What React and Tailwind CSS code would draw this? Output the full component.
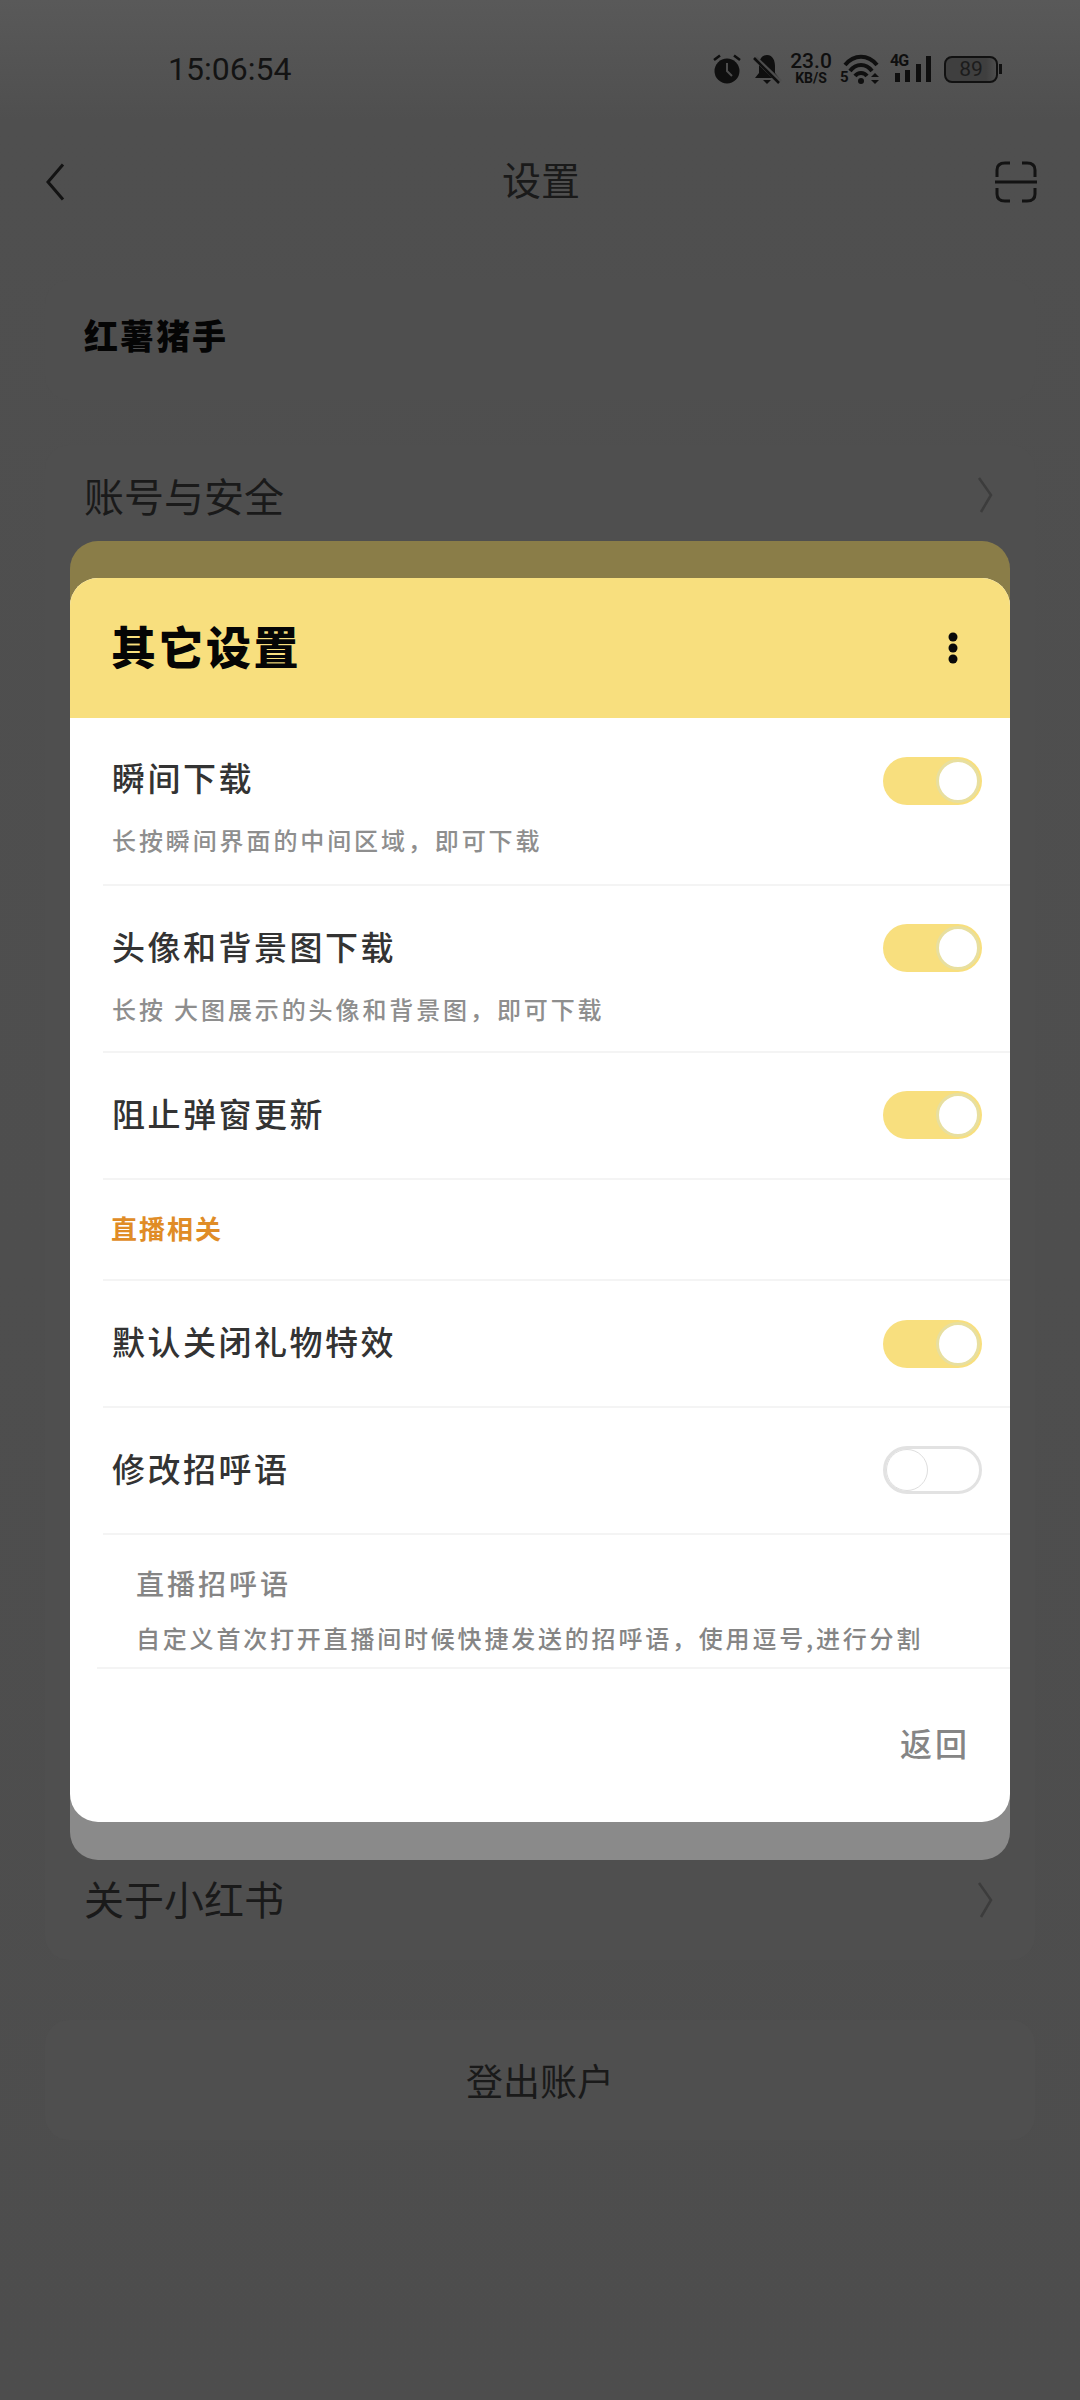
const cjk = "font-['Noto_Sans_CJK_SC',sans-serif]";

function Toggle({ on }) {
  if (on) {
    return (
      <div className="flex h-[48px] w-[99px] shrink-0 items-center justify-end rounded-full bg-[#f8df7e] pr-[2px]">
        <div className="h-[44px] w-[44px] rounded-full border-[3px] border-[#e8df9f] bg-white" />
      </div>
    );
  }
  return (
    <div className="flex h-[48px] w-[99px] shrink-0 items-center rounded-full border-[3px] border-[#e2e2e2] bg-white">
      <div className="h-[42px] w-[42px] rounded-full border border-[#dedede] bg-white" />
    </div>
  );
}

function Row({ title, sub, on, h, top, toggleTop }) {
  return (
    <div className={`ml-[33px] flex justify-between border-b-2 border-[#f4f4f4] pl-[9px] pr-[28px] ${h}`}>
      <div className={top}>
        <div className="h-[40px] text-[33px] leading-[40px] font-medium tracking-[2.5px] whitespace-nowrap text-[#333333]">{title}</div>
        {sub && <div className="mt-[28px] h-[30px] text-[24px] leading-[30px] font-medium tracking-[2.9px] whitespace-nowrap text-[#8e8e8e]">{sub}</div>}
      </div>
      <div className={toggleTop}><Toggle on={on} /></div>
    </div>
  );
}

function Chevron() {
  return (
    <svg width="16" height="38" viewBox="0 0 16 38" fill="none" stroke="#3c3c3c" strokeWidth="2.5" className="shrink-0">
      <path d="M2 2 L14 19 L4 36" />
    </svg>
  );
}

function StatusIcons() {
  return (
    <div className="flex h-[34px] w-[290px] items-center">
      <svg width="30" height="32" viewBox="0 0 30 32" className="ml-[1px] shrink-0">
        <circle cx="15" cy="18" r="12.5" fill="#0f0f0f" />
        <path d="M15 10 V18 L20 23" stroke="#4d4d4d" strokeWidth="2" fill="none" />
        <path d="M2 7 L8 2.5 M28 7 L22 2.5" stroke="#0f0f0f" strokeWidth="2.5" />
      </svg>
      <svg width="30" height="32" viewBox="0 0 30 32" className="ml-[10px] shrink-0">
        <path d="M15 2 C9 2 7 8 7 13 V20 L3 25 H27 L23 20 V13 C23 8 21 2 15 2 Z" fill="#0f0f0f" />
        <path d="M11 27 H19 L15 31 Z" fill="#0f0f0f" />
        <path d="M3 5 L28 29" stroke="#4d4d4d" strokeWidth="5" />
        <path d="M2 5 L27 30" stroke="#0f0f0f" strokeWidth="2.5" />
      </svg>
      <div className="ml-[8px] flex w-[42px] shrink-0 flex-col items-center font-['Roboto',sans-serif] font-medium text-[#0f0f0f]">
        <span className="h-[17px] text-[21px] leading-[17px]">23.0</span>
        <span className="mt-[1px] text-[14px] leading-[14px] font-bold">KB/S</span>
      </div>
      <svg width="42" height="32" viewBox="0 0 42 32" className="ml-[8px] shrink-0">
        <path d="M5 12 C14 1 28 1 37 12 M10 18 C16 10 26 10 32 18 M15 23 C18 19 24 19 27 23" stroke="#0f0f0f" strokeWidth="4" fill="none" />
        <circle cx="21" cy="28" r="3" fill="#0f0f0f" />
        <path d="M31 24 L35 20 L39 24 Z M31 27 L35 31 L39 27 Z" fill="#0f0f0f" />
        <text x="0" y="29" fontSize="15" fontWeight="700" fill="#0f0f0f" fontFamily="Roboto">5</text>
      </svg>
      <div className="relative ml-[10px] h-[30px] w-[40px] shrink-0">
        <span className="absolute top-[-1px] left-[-2px] font-['Roboto',sans-serif] text-[16px] leading-[16px] font-bold tracking-[-1px] text-[#0f0f0f]">4G</span>
        <svg width="40" height="30" viewBox="0 0 40 30" className="absolute top-0 left-0">
          <path d="M3 19 H8 V28 H3 Z M13 16 H18 V28 H13 Z M24 10 H29 V28 H24 Z M34 2 H39 V28 H34 Z" fill="#0f0f0f" />
        </svg>
      </div>
      <div className="ml-[12px] flex h-[27px] w-[54px] shrink-0 items-center justify-center rounded-[8px] border-2 border-[#111111] bg-[linear-gradient(90deg,#3f3f3f_80%,#4d4d4d)] font-['Roboto',sans-serif] text-[21px] leading-none text-[#1c1c1c]">89</div>
      <div className="ml-[1px] h-[10px] w-[3px] shrink-0 bg-[#111111]" />
    </div>
  );
}

export default function App() {
  return (
    <div className={`${cjk} relative h-[2400px] w-[1080px] overflow-hidden bg-[linear-gradient(180deg,#595959_0px,#4f4f4f_120px,#4d4d4d_100%)]`}>
      {/* status bar */}
      <div className="flex h-[136px] items-center justify-between pt-[2px] pr-[79px] pl-[168px]">
        <span className="font-['Roboto',sans-serif] text-[32px] leading-none text-[#131313]">15:06:54</span>
        <StatusIcons />
      </div>

      {/* title bar */}
      <div className="grid h-[92px] grid-cols-[1fr_auto_1fr] items-center pr-[43px] pl-[45px]">
        <svg width="20" height="38" viewBox="0 0 20 38" fill="none" stroke="#131313" strokeWidth="3">
          <path d="M18 1.5 L3 19 L18 36.5" />
        </svg>
        <span className="pb-[7px] text-[39px] leading-none text-[#1a1a1a]">设置</span>
        <svg width="42" height="42" viewBox="0 0 42 42" fill="none" stroke="#131313" strokeWidth="3" className="justify-self-end">
          <path d="M2 16 V9 C2 4 5 2 10 2 H15 M27 2 H32 C37 2 40 4 40 9 V16 M0 21 H42 M2 27 V33 C2 38 5 40 10 40 H15 M27 40 H32 C37 40 40 38 40 33 V27" />
        </svg>
      </div>

      {/* page beneath the dialog */}
      <div className="mx-[45px] mt-[52px] flex h-[120px] items-center rounded-[24px] bg-[#4f4f4f] px-[39px]">
        <span className="pb-[10px] text-[34px] leading-none font-black tracking-[2px] text-[#050505]">红薯猪手</span>
      </div>
      <div className="mx-[45px] mt-[45px] flex h-[1515px] flex-col justify-between rounded-[24px] bg-[#4f4f4f] pr-[42px] pb-[30px] pl-[39px]">
        <div className="flex h-[100px] items-center justify-between">
          <span className="text-[40px] leading-none text-[#1a1a1a]">账号与安全</span>
          <Chevron />
        </div>
        <div className="flex h-[60px] items-center justify-between">
          <span className="pb-[4px] text-[40px] leading-none text-[#1a1a1a]">关于小红书</span>
          <Chevron />
        </div>
      </div>
      <div className="mx-[45px] mt-[60px] flex h-[120px] items-center justify-center rounded-[24px] bg-[#4f4f4f]">
        <span className="text-[37px] leading-none text-[#1a1a1a]">登出账户</span>
      </div>

      {/* dialog */}
      <div className="absolute top-[541px] left-[70px] h-[1319px] w-[940px] rounded-[28px] bg-[linear-gradient(180deg,#8a7d48_0px,#8a7d48_400px,#8a8a8a_400px)]">
        <div className="absolute top-[37px] left-0 h-[1244px] w-[940px] overflow-hidden rounded-[28px] bg-white">
          <div className="flex h-[140px] items-center justify-between bg-[#f8df7e] pr-[51px] pl-[41px]">
            <span className="pb-[6px] text-[45px] leading-none font-black tracking-[2.5px] text-[#050505]">其它设置</span>
            <svg width="12" height="32" viewBox="0 0 12 32" fill="#0a0a0a">
              <ellipse cx="6" cy="5" rx="4.5" ry="4.5" />
              <ellipse cx="6" cy="16" rx="4.5" ry="4.5" />
              <ellipse cx="6" cy="27" rx="4.5" ry="4.5" />
            </svg>
          </div>

          <Row title="瞬间下载" sub="长按瞬间界面的中间区域，即可下载" on h="h-[168px]" top="pt-[39px]" toggleTop="pt-[39px]" />
          <Row title="头像和背景图下载" sub="长按 大图展示的头像和背景图，即可下载" on h="h-[167px]" top="pt-[40px]" toggleTop="pt-[38px]" />
          <Row title="阻止弹窗更新" on h="h-[127px]" top="pt-[40px]" toggleTop="pt-[38px]" />

          <div className="ml-[33px] flex h-[101px] items-center border-b-2 border-[#f4f4f4] pb-[3px] pl-[8px]">
            <span className="text-[26px] leading-none font-semibold tracking-[2px] text-[#e08c26]">直播相关</span>
          </div>

          <Row title="默认关闭礼物特效" on h="h-[127px]" top="pt-[40px]" toggleTop="pt-[39px]" />
          <Row title="修改招呼语" h="h-[127px]" top="pt-[40px]" toggleTop="pt-[38px]" />

          <div className="ml-[27px] h-[134px] border-b-2 border-[#f4f4f4] pt-[33px] pl-[39px]">
            <div className="h-[30px] text-[28px] leading-[30px] font-medium tracking-[3px] text-[#858585]">直播招呼语</div>
            <div className="mt-[25px] h-[30px] text-[24px] leading-[30px] font-medium tracking-[2.8px] whitespace-nowrap text-[#858585]">自定义首次打开直播间时候快捷发送的招呼语，使用逗号,进行分割</div>
          </div>

          <div className="flex justify-end pt-[55px] pr-[40px]">
            <span className="text-[32px] leading-[36px] font-medium tracking-[3px] text-[#858585]">返回</span>
          </div>
        </div>
      </div>
    </div>
  );
}
